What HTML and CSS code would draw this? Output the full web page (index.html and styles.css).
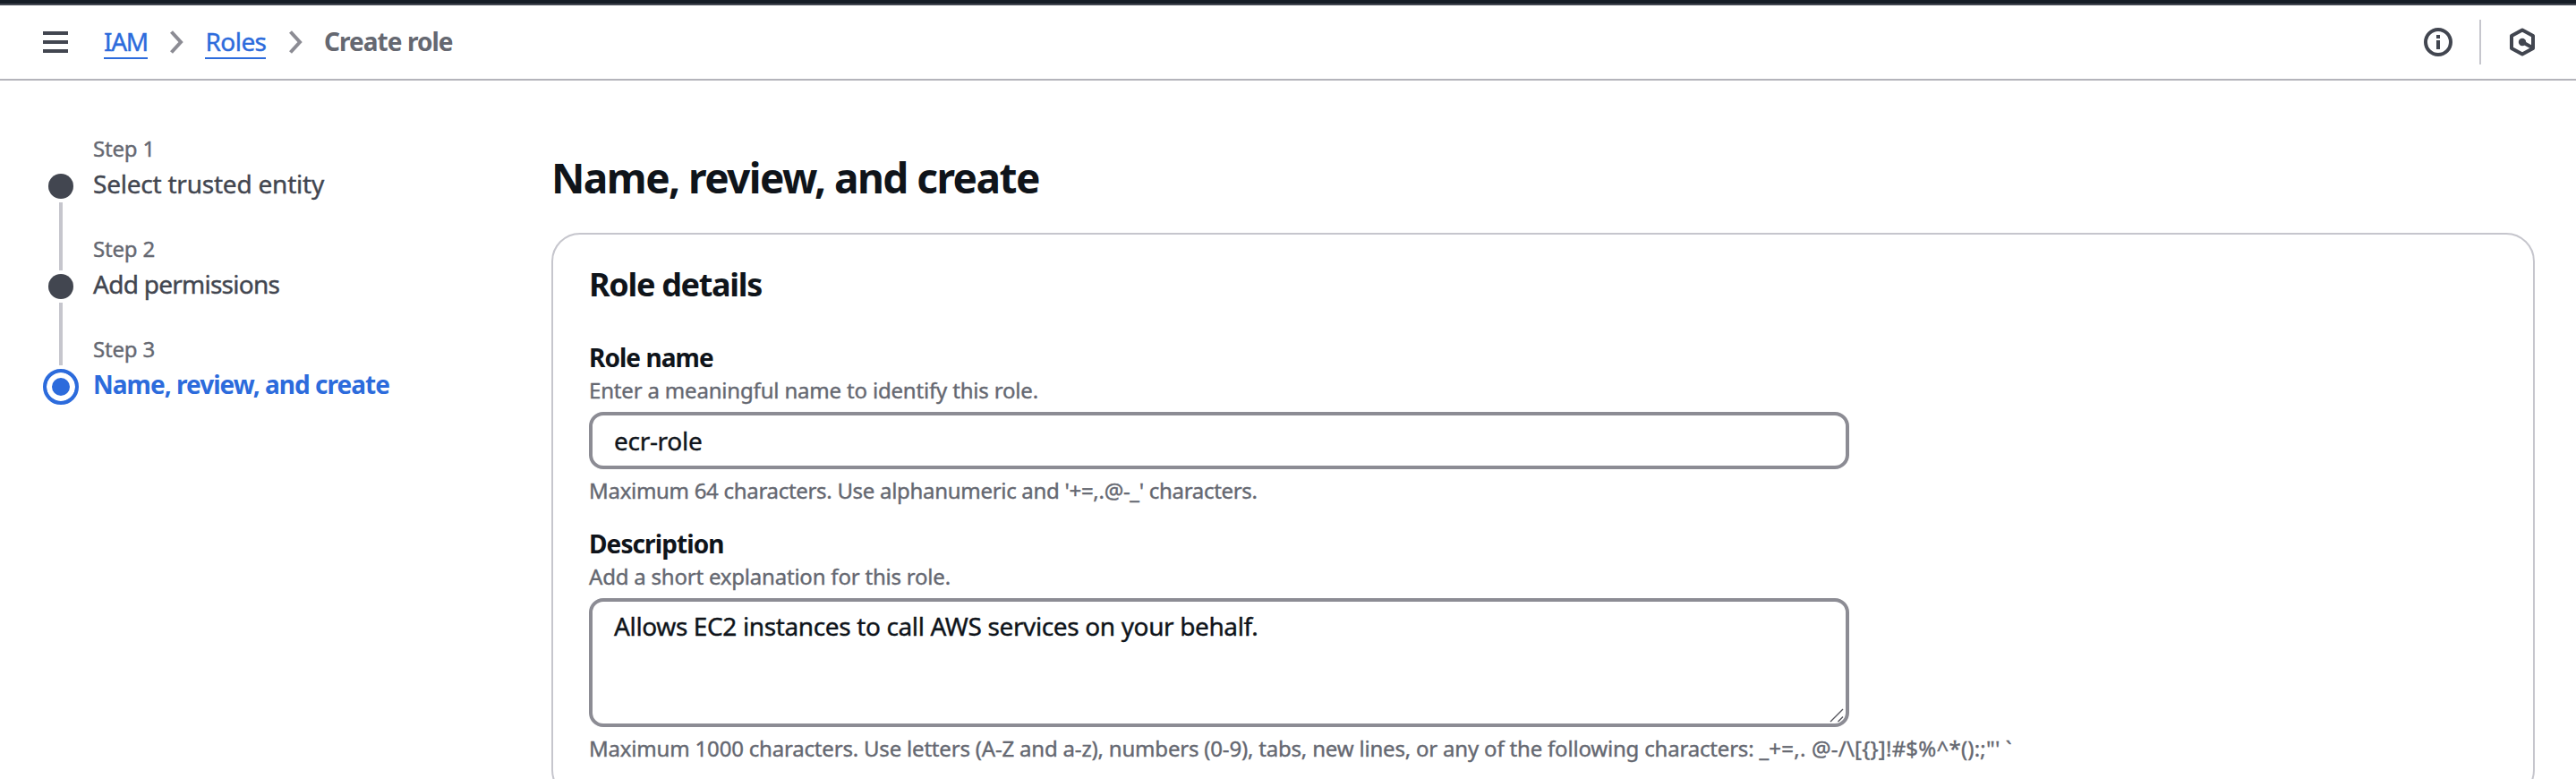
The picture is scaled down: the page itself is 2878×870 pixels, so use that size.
FILE: index.html
```
<!DOCTYPE html>
<html lang="en">
<head>
<meta charset="utf-8">
<title>Create role | IAM</title>
<link rel="stylesheet" href="styles.css">
</head>
<body>
<header class="topbar">
  <svg class="menu" width="28" height="26" viewBox="0 0 28 26"><path d="M0 3h28M0 13h28M0 23h28" stroke="#424650" stroke-width="4"/></svg>
  <nav class="crumbs">
    <a class="crumb-link iam">IAM</a>
    <svg width="16" height="28" viewBox="0 0 16 28"><path d="M2.5 2.5 13 14 2.5 25.5" fill="none" stroke="#8c8c94" stroke-width="4"/></svg>
    <a class="crumb-link roles">Roles</a>
    <svg width="16" height="28" viewBox="0 0 16 28"><path d="M2.5 2.5 13 14 2.5 25.5" fill="none" stroke="#8c8c94" stroke-width="4"/></svg>
    <span class="crumb-current">Create role</span>
  </nav>
  <div class="tools">
    <svg width="32" height="32" viewBox="0 0 32 32"><circle cx="16" cy="16" r="14" fill="none" stroke="#424650" stroke-width="4"/><path d="M16 8v4M16 14v10" stroke="#424650" stroke-width="4"/></svg>
    <span class="divider"></span>
    <svg width="30" height="32" viewBox="0 0 30 32"><path d="M15 2.4 27 9v14l-12 6.600L3 23V9z" fill="none" stroke="#424650" stroke-width="4" stroke-linejoin="round"/><circle cx="15" cy="16" r="4.200" fill="#424650"/><path d="m15 16 11 6" stroke="#424650" stroke-width="4"/></svg>
  </div>
</header>
<div class="page">
  <ol class="steps">
    <li class="step">
      <div class="track"><span class="space"></span><span class="dot"></span><span class="line tail"></span></div>
      <div class="step-text"><div class="step-no">Step 1</div><div class="step-name s1">Select trusted entity</div></div>
    </li>
    <li class="step">
      <div class="track"><span class="line lead"></span><span class="dot"></span><span class="line tail"></span></div>
      <div class="step-text"><div class="step-no">Step 2</div><div class="step-name s2">Add permissions</div></div>
    </li>
    <li class="step">
      <div class="track"><span class="line lead short"></span><span class="ring"></span></div>
      <div class="step-text"><div class="step-no">Step 3</div><div class="step-name current">Name, review, and create</div></div>
    </li>
  </ol>
  <main class="main">
    <h1>Name, review, and create</h1>
    <section class="card">
      <h2>Role details</h2>
      <div class="field">
        <div class="label l1">Role name</div>
        <div class="hint h1">Enter a meaningful name to identify this role.</div>
        <div class="input">ecr-role</div>
        <div class="hint h2">Maximum 64 characters. Use alphanumeric and '+=,.@-_' characters.</div>
      </div>
      <div class="field">
        <div class="label l2">Description</div>
        <div class="hint h3">Add a short explanation for this role.</div>
        <div class="input area">Allows EC2 instances to call AWS services on your behalf.
          <svg class="grip" width="16" height="16" viewBox="0 0 16 16"><path d="M1 15 15 1M9.500 15 15 9.500" stroke="#55555c" stroke-width="1.400"/></svg>
        </div>
        <div class="hint h4">Maximum 1000 characters. Use letters (A-Z and a-z), numbers (0-9), tabs, new lines, or any of the following characters: <span class="symbols">_+=,. @-/\[{}]!#$%^*():;"'<span class="tick">`</span></span></div>
      </div>
    </section>
  </main>
</div>
</body>
</html>
```
FILE: styles.css
```
* { box-sizing: border-box; }
html, body { height: 870px; overflow: hidden; }
body {
  margin: 0;
  background: #fff;
  color: #0f141a;
  font-family: "Noto Sans", "Open Sans", sans-serif;
  font-size: 28px;
  white-space: nowrap;
}
svg { display: block; flex: none; }
.crumb-link, .step-no, .s1, .s2, .hint, .input { -webkit-text-stroke: 0.4px currentColor; }

.topbar {
  display: flex;
  align-items: center;
  height: 90px;
  padding: 2px 45px 0 48px;
  border-top: 4px solid #161d26;
  border-bottom: 2px solid #b4b4bb;
  box-shadow: inset 0 2px 0 #424650;
}
.crumbs { display: flex; align-items: center; margin-left: 40px; line-height: 36px; }
.crumbs svg { margin: 0 24px 0 24.5px; }
.crumb-link { color: #2c6bdc; box-shadow: 0 2px 0 #2c6bdc; margin-bottom: 2px; }
.iam { letter-spacing: -1.27px; }
.roles { letter-spacing: -0.56px; }
.crumb-current { color: #656871; font-weight: 700; letter-spacing: -0.95px; margin-bottom: 2px; }
.tools { display: flex; align-items: center; margin-left: auto; }
.divider { width: 2px; height: 50px; margin: 0 31px 0 30px; background: #c6c6cd; }

.page { display: flex; }
.steps { list-style: none; width: 568px; margin: 0 0 0 48px; padding: 56px 0 0; }
.step { display: flex; height: 112px; }
.track { display: flex; flex-direction: column; align-items: center; width: 40px; margin-right: 16px; }
.space { height: 48px; }
.dot { flex: none; width: 28px; height: 28px; border-radius: 50%; background: #424650; }
.line { width: 4px; background: #c6c6cd; }
.tail { flex: 1; margin-top: 4px; }
.lead { height: 44px; margin-bottom: 4px; }
.short { height: 38px; }
.ring { width: 40px; height: 40px; border: 4px solid #2c6bdc; border-radius: 50%; background: #2c6bdc; box-shadow: inset 0 0 0 6px #fff; }
.step-no { font-size: 24px; line-height: 40px; letter-spacing: -0.2px; color: #656871; }
.step-name { line-height: 38px; color: #424650; }
.s1 { letter-spacing: -0.22px; }
.s2 { letter-spacing: -0.74px; }
.step-name.current { color: #2c6bdc; font-weight: 700; letter-spacing: -0.97px; }

.main { width: 2216px; padding-top: 78px; }
h1 { margin: 0 0 32px; font-size: 46px; line-height: 60px; letter-spacing: -1.55px; }
.card { height: 632px; padding: 32px 40px 0; border: 2px solid #c6c6cd; border-radius: 32px; }
h2 { margin: 0 0 37px; font-size: 36px; line-height: 48px; letter-spacing: -1.31px; }
.field { margin-bottom: 23px; }
.label { font-weight: 700; line-height: 40px; margin-bottom: 1px; }
.l1 { letter-spacing: -0.95px; }
.l2 { letter-spacing: -0.91px; }
.hint { font-size: 24px; line-height: 32px; color: #656871; }
.h1 { letter-spacing: -0.18px; }
.h2 { letter-spacing: -0.3px; }
.h3 { letter-spacing: -0.21px; }
.h4 { letter-spacing: -0.19px; }
.symbols { letter-spacing: 0.22px; }
.tick { margin-left: 6px; }
.input {
  width: 1408px;
  height: 64px;
  margin: 8px 0;
  padding: 0 24px;
  border: 4px solid #8c8c94;
  border-radius: 16px;
  line-height: 56px;
  letter-spacing: -0.3px;
}
.area { position: relative; height: 144px; padding-top: 5px; line-height: 44px; letter-spacing: -0.37px; }
.grip { position: absolute; right: 2px; bottom: 1px; }
```
